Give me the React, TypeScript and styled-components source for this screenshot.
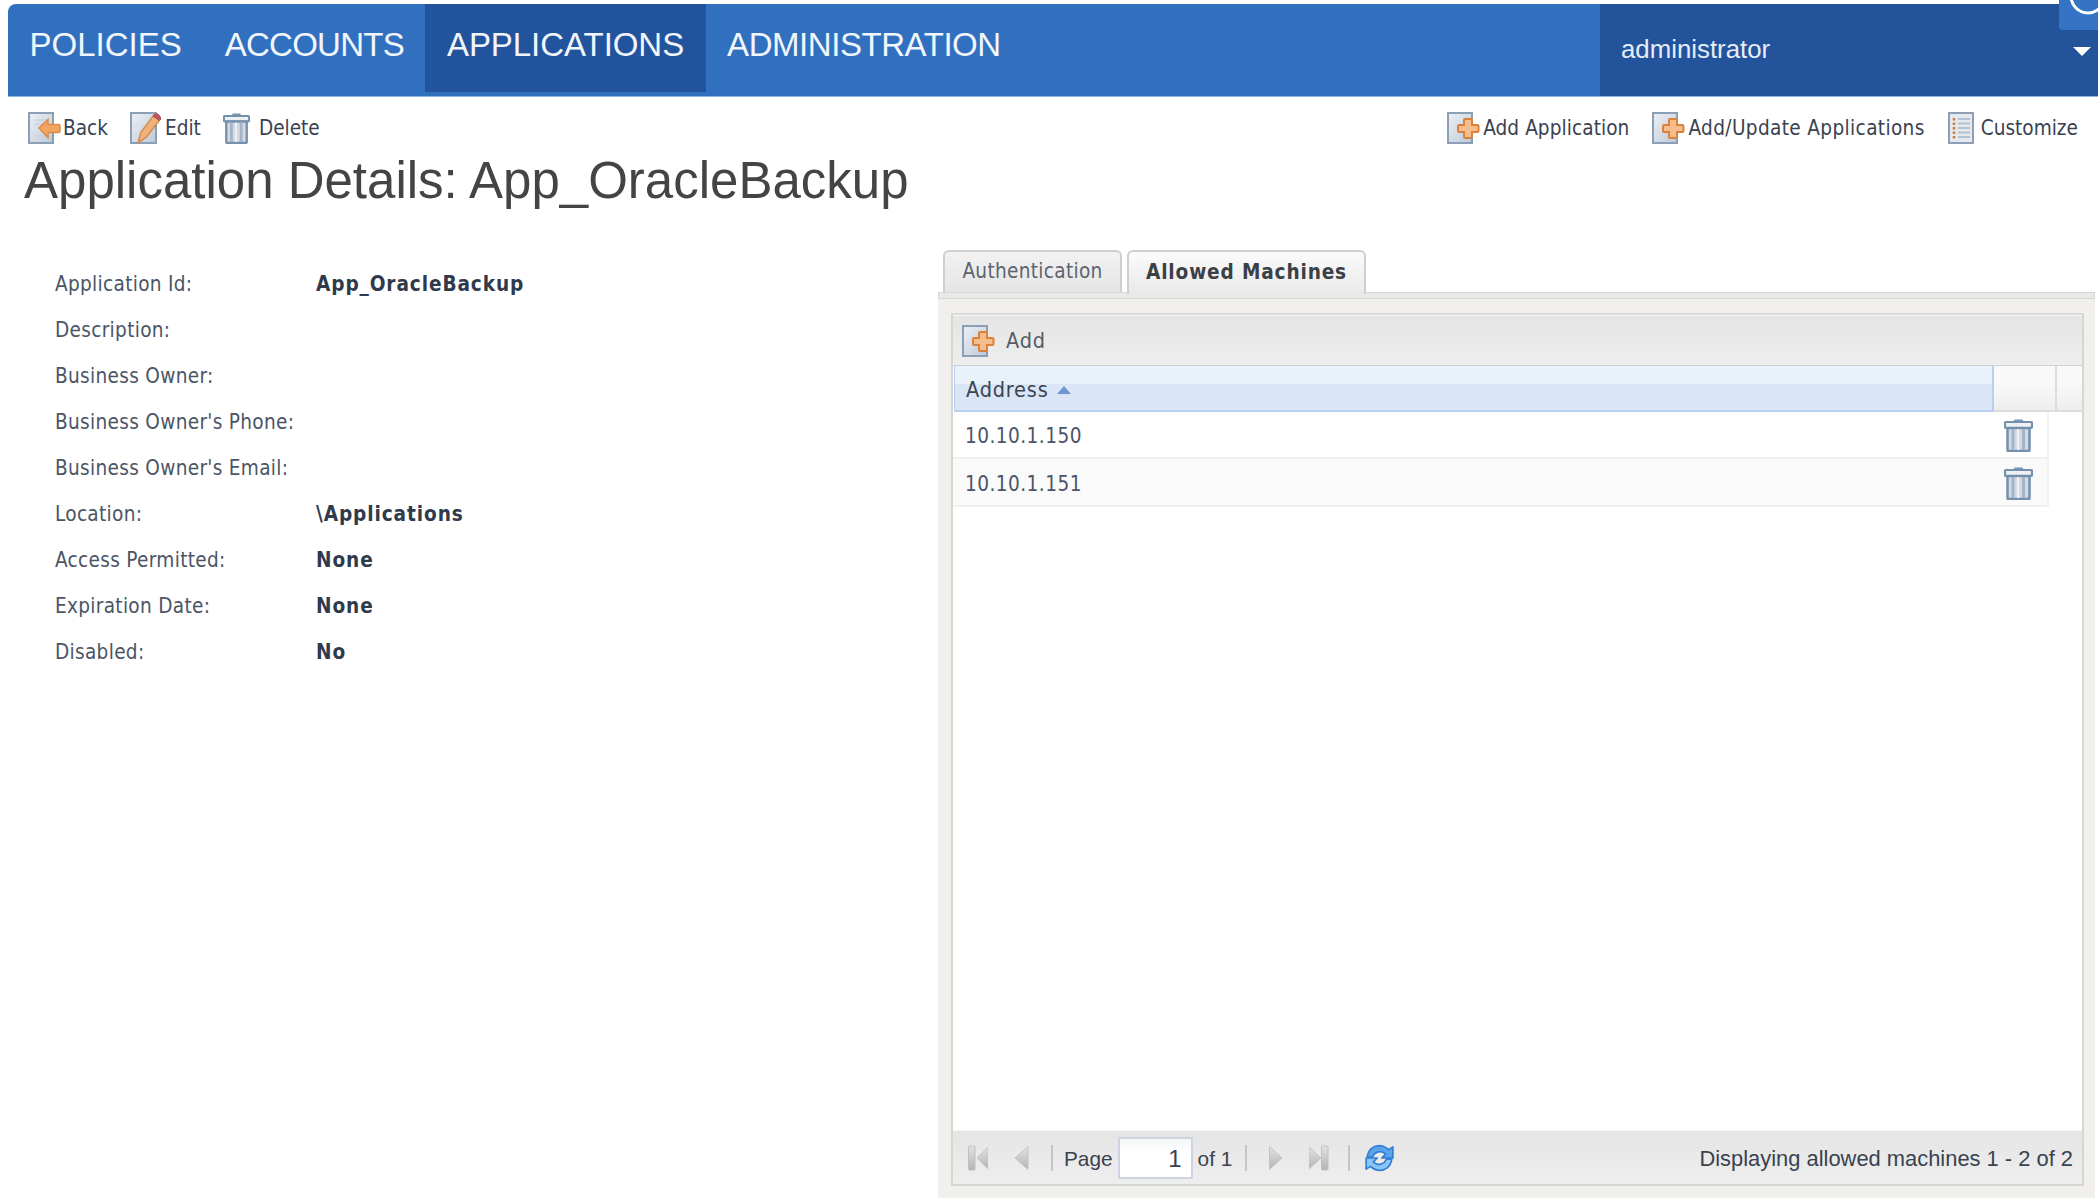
import React from 'react';
import styled, { createGlobalStyle } from 'styled-components';

const GlobalStyle = createGlobalStyle`
  html, body {
    margin: 0;
    padding: 0;
    background: #fff;
  }
  * {
    box-sizing: border-box;
  }
`;

const tahomaish = `"DejaVu Sans Condensed", "DejaVu Sans", sans-serif`;
const arial = `"Liberation Sans", Arial, sans-serif`;

const Page = styled.div`
  position: relative;
  width: 2098px;
  height: 1198px;
  overflow: hidden;
  display: flex;
  flex-direction: column;
  padding-top: 4px;
  font-family: ${tahomaish};
  font-stretch: condensed;
  color: #3c4656;
`;

const NavBar = styled.nav`
  display: flex;
  height: 93px;
  margin-left: 8px;
  background: #3170bf;
  border-bottom: 1px solid #8fb6e4;
  border-top-left-radius: 8px;
  font-family: ${arial};
  font-stretch: normal;
  color: #f2f6fc;
`;

const NavItem = styled.div<{ $active?: boolean; $tracking?: number }>`
  height: 88px;
  padding: 23px 21.5px 0;
  font-size: 33px;
  line-height: 36px;
  letter-spacing: ${(p) => p.$tracking ?? 0}px;
  background: ${(p) => (p.$active ? '#22549d' : 'transparent')};
`;

const UserMenu = styled.div`
  margin-left: auto;
  width: 498px;
  height: 92px;
  display: flex;
  align-items: center;
  justify-content: space-between;
  padding: 0 7px 2px 21px;
  background: #22539b;
  font-size: 25.8px;
  color: #e6edf7;
`;

const Caret = styled.span`
  width: 0;
  height: 0;
  margin-top: 4px;
  border-left: 9px solid transparent;
  border-right: 9px solid transparent;
  border-top: 9px solid #fff;
`;

const CornerBadge = styled.div`
  position: absolute;
  top: 0;
  right: 0;
  width: 39px;
  height: 30px;
  overflow: hidden;
  background: #3573c4;
  border-bottom-left-radius: 4px;
`;

const Toolbar = styled.div`
  display: flex;
  justify-content: space-between;
  height: 53px;
  padding: 15px 20px 0 28px;
`;

const ToolGroup = styled.div<{ $gap: number }>`
  display: flex;
  gap: ${(p) => p.$gap}px;
`;

const ToolButton = styled.div<{ $gap: number; $tracking?: number }>`
  display: flex;
  align-items: center;
  height: 32px;
  gap: ${(p) => p.$gap}px;
  font-size: 20.6px;
  letter-spacing: ${(p) => p.$tracking ?? 0}px;
  color: #3a4250;
`;

const Title = styled.h1`
  margin: 0;
  height: 100px;
  padding: 2px 0 0 24px;
  font-family: ${arial};
  font-stretch: normal;
  font-size: 51px;
  line-height: 58px;
  font-weight: 400;
  color: #444;
`;

const Content = styled.div`
  flex: 1;
  min-height: 0;
  display: flex;
`;

const Details = styled.div`
  width: 938px;
  padding: 11px 0 0 55px;
  display: grid;
  grid-template-columns: 261px 1fr;
  grid-auto-rows: 46px;
  align-content: start;
  align-items: center;
  font-size: 20.6px;
`;

const Label = styled.div`
  letter-spacing: 0.3px;
  color: #4b5566;
`;

const Value = styled.div`
  font-weight: 700;
  letter-spacing: 0.9px;
  color: #2f3a4c;
`;

const TabPanel = styled.section`
  width: 1157px;
  display: flex;
  flex-direction: column;
`;

const TabRow = styled.div`
  display: flex;
  gap: 5px;
  height: 42px;
  padding-left: 5px;
`;

const Tab = styled.div<{ $active?: boolean; $width: number }>`
  width: ${(p) => p.$width}px;
  height: ${(p) => (p.$active ? 44 : 42)}px;
  position: relative;
  z-index: ${(p) => (p.$active ? 1 : 0)};
  display: flex;
  align-items: center;
  justify-content: center;
  padding-bottom: 2px;
  border: 2px solid #cfcfcf;
  border-bottom: none;
  border-radius: 6px 6px 0 0;
  background: ${(p) =>
    p.$active
      ? 'linear-gradient(#fbfbfb, #e9e9e9)'
      : 'linear-gradient(#f2f2f2, #e5e5e5)'};
  font-size: 20.6px;
  font-weight: ${(p) => (p.$active ? 700 : 400)};
  letter-spacing: ${(p) => (p.$active ? 0.85 : 0.3)}px;
  color: ${(p) => (p.$active ? '#3b3f46' : '#5c6470')};
`;

const TabStrip = styled.div`
  height: 7px;
  background: #e9e9e9;
  border: 1px solid #d6d6d6;
`;

const PanelBody = styled.div`
  flex: 1;
  min-height: 0;
  padding: 14px 11px 12px 13px;
  background: #f1f0ed;
`;

const Grid = styled.div`
  height: 100%;
  display: flex;
  flex-direction: column;
  border: 2px solid #d6d6d6;
  border-top-color: #dadada;
`;

const GridToolbar = styled.div`
  height: 51px;
  display: flex;
  align-items: center;
  gap: 11px;
  padding-left: 9px;
  background: linear-gradient(#e5e5e5, #eeeeee);
  border-top: 1px solid #f8f8f8;
  border-bottom: 1px solid #d0d0d0;
  font-size: 21.5px;
  letter-spacing: 0.8px;
  color: #555c66;
`;

const HeaderRow = styled.div`
  height: 46px;
  display: flex;
  background: #fff;
`;

const SortHeader = styled.div`
  flex: 1;
  display: flex;
  align-items: center;
  gap: 8px;
  margin-left: 1px;
  padding: 2px 0 0 11px;
  background: linear-gradient(#e9f1fb 40%, #dae6f7 40%);
  border-left: 1px solid #b7cff0;
  border-right: 2px solid #b7cff0;
  border-bottom: 2px solid #b7cff0;
  font-size: 21.5px;
  letter-spacing: 0.8px;
  color: #3c4450;
`;

const SortArrow = styled.span`
  width: 0;
  height: 0;
  margin-top: 2px;
  border-left: 7px solid transparent;
  border-right: 7px solid transparent;
  border-bottom: 8px solid #7097d2;
`;

const HeaderCell = styled.div<{ $width: number }>`
  width: ${(p) => p.$width}px;
  background: linear-gradient(#f9f9f9 40%, #eeeeee);
  border-bottom: 2px solid #dcdcdc;
  border-right: 2px solid #dcdcdc;

  &:last-child {
    border-right: none;
  }
`;

const GridBody = styled.div`
  flex: 1;
  min-height: 0;
  background: #fff;
`;

const Row = styled.div<{ $alt?: boolean }>`
  width: 1096px;
  height: ${(p) => (p.$alt ? 48 : 47)}px;
  display: flex;
  align-items: center;
  justify-content: space-between;
  padding: ${(p) => (p.$alt ? 3 : 2)}px 14px 0 12px;
  background: ${(p) => (p.$alt ? '#fafafa' : '#fff')};
  border-bottom: 2px solid #f0f0f0;
  border-right: 2px solid #f3f3f3;
  font-size: 20.6px;
  letter-spacing: 0.45px;
  color: #4a5567;
`;

const Pager = styled.div`
  height: 54px;
  display: flex;
  align-items: center;
  padding: 0 9px 0 15px;
  background: linear-gradient(#e5e5e5, #eeeeee);
  border-top: 1px solid #f8f8f8;
  font-family: ${arial};
  font-stretch: normal;
  font-size: 20.8px;
  color: #3a4250;
`;

const PagerText = styled.span`
  padding-top: 3px;
`;

const PagerButton = styled.span<{ $left?: number }>`
  display: flex;
  margin-left: ${(p) => p.$left ?? 0}px;
`;

const Separator = styled.span<{ $left: number; $right: number }>`
  width: 2px;
  height: 26px;
  margin: 0 ${(p) => p.$right}px 0 ${(p) => p.$left}px;
  background: #c6c6c0;
`;

const PageInput = styled.div`
  width: 75px;
  height: 42px;
  margin: 0 5px;
  padding: 3px 9px 0 0;
  display: flex;
  align-items: center;
  justify-content: flex-end;
  background: linear-gradient(#f4f6f8, #fff 40%);
  border: 2px solid #cdd3e0;
  font-size: 24px;
`;

const PagerStatus = styled(PagerText)`
  margin-left: auto;
  font-size: 21.9px;
`;

const DocGradient = ({ id }: { id: string }) => (
  <linearGradient id={id} x1="0" y1="0" x2="1" y2="1">
    <stop offset="0" stopColor="#eef1f5" />
    <stop offset="1" stopColor="#bcc8d8" />
  </linearGradient>
);

const BackIcon = () => (
  <svg width="33" height="32" viewBox="0 0 33 32">
    <DocGradient id="backDoc" />
    <rect x="1" y="1" width="24" height="30" fill="url(#backDoc)" stroke="#8b9fb6" strokeWidth="2" />
    <path d="M6 8h15M6 12h15M6 24h15" stroke="#c9d2dd" strokeWidth="1.5" />
    <path d="M11 16 20 7.5v5h10.5a1.5 1.5 0 0 1 1.5 1.5v5a1.5 1.5 0 0 1-1.5 1.5H20v5z" fill="#f2a561" stroke="#de8a45" strokeWidth="1.5" />
  </svg>
);

const EditIcon = () => (
  <svg width="33" height="32" viewBox="0 0 33 32">
    <DocGradient id="editDoc" />
    <rect x="1" y="1" width="25" height="30" fill="url(#editDoc)" stroke="#8b9fb6" strokeWidth="2" />
    <path d="M8 31 11 20 24 3l6 4.5L16.500 25z" fill="#eeb27c" stroke="#d68a4a" strokeWidth="1.5" />
    <path d="M24 3c2-2.500 7-.5 6.500 4.500l-1 1-6.500-4.500z" fill="#c25560" stroke="#a8434f" strokeWidth="1" />
  </svg>
);

const TrashIcon = ({ width, height }: { width: number; height: number }) => (
  <svg width={width} height={height} viewBox="0 0 29 33">
    <rect x="10" y="0.500" width="9" height="3.500" rx="1" fill="#7b93ad" />
    <rect x="1" y="3" width="27" height="6" rx="1" fill="#edf0f4" stroke="#7490ad" strokeWidth="2.200" />
    <path d="M3.500 9h22v22a1 1 0 0 1-1 1h-20a1 1 0 0 1-1-1z" fill="#d3dae4" stroke="#7490ad" strokeWidth="2.500" />
    <path d="M9 10v21M19.500 10v21" stroke="#a4b4c7" strokeWidth="3" />
    <path d="M14 10v21" stroke="#eef1f5" strokeWidth="2" />
  </svg>
);

const AddIcon = ({ id }: { id: string }) => (
  <svg width="33" height="32" viewBox="0 0 33 32">
    <DocGradient id={id} />
    <rect x="1" y="1" width="24" height="30" fill={`url(#${id})`} stroke="#8b9fb6" strokeWidth="2" />
    <path d="M18 7h6a1 1 0 0 1 1 1v5h5.500a1 1 0 0 1 1 1v5a1 1 0 0 1-1 1H25v5a1 1 0 0 1-1 1h-6a1 1 0 0 1-1-1v-5h-5a1 1 0 0 1-1-1v-5a1 1 0 0 1 1-1h5V8a1 1 0 0 1 1-1z" fill="#f6bd8c" stroke="#dc803a" strokeWidth="2" />
  </svg>
);

const CustomizeIcon = () => (
  <svg width="26" height="32" viewBox="0 0 26 32">
    <rect x="1" y="1" width="24" height="30" fill="#e6eaef" stroke="#8b9fb6" strokeWidth="2" />
    <path d="M6 6v21" stroke="#cc7a42" strokeWidth="2.500" strokeDasharray="2.500 2" />
    <path d="M10 7h12M10 11.500h12M10 16h12M10 20.500h12M10 25h12" stroke="#b5c0ce" strokeWidth="1.800" />
  </svg>
);

const PagerArrow = ({ dir, bar }: { dir: 'left' | 'right'; bar?: boolean }) => {
  const gradId = `pg-${dir}-${bar ? 1 : 0}`;
  let triangle = dir === 'left' ? 'M15 1.500 2 13l13 11.500z' : 'M1.500 1.500 14 13 1.500 24.500z';
  if (bar) triangle = dir === 'left' ? 'M20 2 9 13l11 11z' : 'M0 2l12 11L0 24z';
  return (
    <svg width={bar ? 20 : 16} height="26" viewBox={`0 0 ${bar ? 20 : 16} 26`}>
      <defs>
        <linearGradient id={gradId} x1="0" y1="0" x2="0" y2="1">
          <stop offset="0" stopColor="#e2e2e2" />
          <stop offset="1" stopColor="#b4b4b4" />
        </linearGradient>
      </defs>
      {bar && (
        <rect x={dir === 'left' ? 0.5 : 12.5} y="1" width="6.500" height="24" rx="1" fill={`url(#${gradId})`} stroke="#c0c0c0" />
      )}
      <path d={triangle} fill={`url(#${gradId})`} stroke="#c4c4c4" />
    </svg>
  );
};

const RefreshIcon = () => (
  <svg width="29" height="28" viewBox="2 2 26 24">
    <path d="M4 13C5 6 10 2.500 16 3c3 .2 5 1.500 7 3.500L27 4v10H17l3.500-3.500C18.500 8.500 16 8 14 8.500c-3 .7-4.500 2.500-5 4.500z" fill="#5aa5ea" stroke="#2f7fd6" strokeWidth="1.500" strokeLinejoin="round" />
    <path d="M26 15c-1 7-6 10.500-12 10-3-.2-5-1.500-7-3.500L3 24V14h10l-3.500 3.500c2 2 4.500 2.500 6.500 2 3-.7 4.500-2.500 5-4.500z" fill="#8cc4f4" stroke="#2f7fd6" strokeWidth="1.500" strokeLinejoin="round" />
  </svg>
);

const details: [string, string][] = [
  ['Application Id:', 'App_OracleBackup'],
  ['Description:', ''],
  ['Business Owner:', ''],
  ["Business Owner's Phone:", ''],
  ["Business Owner's Email:", ''],
  ['Location:', '\\Applications'],
  ['Access Permitted:', 'None'],
  ['Expiration Date:', 'None'],
  ['Disabled:', 'No'],
];

const App = (): JSX.Element => (
  <Page>
    <GlobalStyle />
    <NavBar>
      <NavItem>POLICIES</NavItem>
      <NavItem $tracking={-0.75}>ACCOUNTS</NavItem>
      <NavItem $active $tracking={-0.05}>APPLICATIONS</NavItem>
      <NavItem $tracking={-0.45}>ADMINISTRATION</NavItem>
      <UserMenu>
        administrator
        <Caret />
      </UserMenu>
    </NavBar>
    <CornerBadge>
      <svg width="39" height="30" viewBox="0 0 39 30">
        <circle cx="29" cy="-4" r="17" fill="none" stroke="#fff" strokeWidth="3" />
      </svg>
    </CornerBadge>

    <Toolbar>
      <ToolGroup $gap={22}>
        <ToolButton $gap={2}>
          <BackIcon />
          Back
        </ToolButton>
        <ToolButton $gap={2}>
          <EditIcon />
          Edit
        </ToolButton>
        <ToolButton $gap={9}>
          <TrashIcon width={27} height={31} />
          Delete
        </ToolButton>
      </ToolGroup>
      <ToolGroup $gap={23}>
        <ToolButton $gap={3} $tracking={0.07}>
          <AddIcon id="addApp" />
          Add Application
        </ToolButton>
        <ToolButton $gap={3} $tracking={0.35}>
          <AddIcon id="addUpdate" />
          Add/Update Applications
        </ToolButton>
        <ToolButton $gap={7}>
          <CustomizeIcon />
          Customize
        </ToolButton>
      </ToolGroup>
    </Toolbar>

    <Title>Application Details: App_OracleBackup</Title>

    <Content>
      <Details>
        {details.map(([label, value]) => (
          <React.Fragment key={label}>
            <Label>{label}</Label>
            <Value>{value}</Value>
          </React.Fragment>
        ))}
      </Details>

      <TabPanel>
        <TabRow>
          <Tab $width={179}>Authentication</Tab>
          <Tab $width={239} $active>
            Allowed Machines
          </Tab>
        </TabRow>
        <TabStrip />
        <PanelBody>
          <Grid>
            <GridToolbar>
              <AddIcon id="addMachine" />
              Add
            </GridToolbar>
            <HeaderRow>
              <SortHeader>
                Address
                <SortArrow />
              </SortHeader>
              <HeaderCell $width={63} />
              <HeaderCell $width={25} />
            </HeaderRow>
            <GridBody>
              <Row>
                10.10.1.150
                <TrashIcon width={29} height={33} />
              </Row>
              <Row $alt>
                10.10.1.151
                <TrashIcon width={29} height={33} />
              </Row>
            </GridBody>
            <Pager>
              <PagerArrow dir="left" bar />
              <PagerButton $left={25}>
                <PagerArrow dir="left" />
              </PagerButton>
              <Separator $left={22} $right={11} />
              <PagerText>Page</PagerText>
              <PageInput>1</PageInput>
              <PagerText>of 1</PagerText>
              <Separator $left={13} $right={21} />
              <PagerArrow dir="right" />
              <PagerButton $left={25}>
                <PagerArrow dir="right" bar />
              </PagerButton>
              <Separator $left={19} $right={15} />
              <RefreshIcon />
              <PagerStatus>Displaying allowed machines 1 - 2 of 2</PagerStatus>
            </Pager>
          </Grid>
        </PanelBody>
      </TabPanel>
    </Content>
  </Page>
);

export default App;
